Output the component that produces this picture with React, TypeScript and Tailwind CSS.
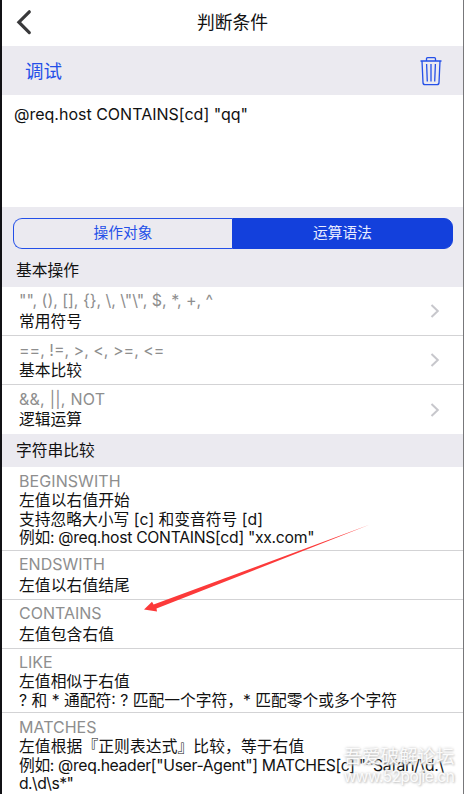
import React from "react";

type Line = { text: string; spacing?: string };
type Item = { title: string; titleSpacing?: string; offset: string; descOffset: string; lines: Line[]; height: string; arrow?: boolean };

const basics: Item[] = [
  { title: '"", (), [], {}, \\, \\"\\", $, *, +, ^', titleSpacing: "tracking-[-0.03px]", offset: "pt-[3px]", descOffset: "pt-[3px]", height: "h-[49px]", lines: [{ text: "常用符号" }], arrow: true },
  { title: "==, !=, >, <, >=, <=", offset: "pt-[4px]", descOffset: "pt-[2px]", height: "h-[49px]", lines: [{ text: "基本比较" }], arrow: true },
  { title: "&&, ||, NOT", titleSpacing: "tracking-[0.25px]", offset: "pt-[4px]", descOffset: "pt-[2px]", height: "h-[49px]", lines: [{ text: "逻辑运算" }], arrow: true },
];

const strings: Item[] = [
  {
    title: "BEGINSWITH",
    titleSpacing: "tracking-[0.08px]",
    offset: "pt-[3.5px]",
    descOffset: "pt-[1.5px]",
    height: "h-[84px]",
    lines: [
      { text: "左值以右值开始", spacing: "tracking-[0.1px]" },
      { text: "支持忽略大小写 [c] 和变音符号 [d]" },
      { text: '例如: @req.host CONTAINS[cd] "xx.com"', spacing: "tracking-[-0.3px]" },
    ],
  },
  { title: "ENDSWITH", offset: "pt-[2.5px]", descOffset: "pt-[3.5px]", height: "h-[49px]", lines: [{ text: "左值以右值结尾", spacing: "tracking-[0.1px]" }] },
  { title: "CONTAINS", offset: "pt-[2.5px]", descOffset: "pt-[3.5px]", height: "h-[49px]", lines: [{ text: "左值包含右值", spacing: "tracking-[0.1px]" }] },
  {
    title: "LIKE",
    offset: "pt-[2.5px]",
    descOffset: "pt-[1.5px]",
    height: "h-[64px]",
    lines: [{ text: "左值相似于右值", spacing: "tracking-[0.1px]" }, { text: "? 和 * 通配符: ? 匹配一个字符，* 匹配零个或多个字符" }],
  },
  {
    title: "MATCHES",
    offset: "pt-[3.5px]",
    descOffset: "pt-[1.5px]",
    height: "h-[81px]",
    lines: [
      { text: "左值根据『正则表达式』比较，等于右值", spacing: "tracking-[0.1px]" },
      { text: '例如: @req.header["User-Agent"] MATCHES[c] "^Safari/\\d.\\', spacing: "tracking-[-0.34px]" },
      { text: 'd.\\d\\s*"', spacing: "tracking-[-0.55px]" },
    ],
  },
];

function Row({ item, last }: { item: Item; last: boolean }) {
  return (
    <div className={`flex shrink-0 items-center justify-between bg-white pl-[17px] pr-[23px] ${item.height} ${last ? "" : "border-b border-[#d3d3d5]"}`}>
      <div className={`self-start whitespace-pre ${item.offset}`}>
        <div className={`h-5 text-[16px] leading-5 text-[#8e8e8e] ${item.titleSpacing ?? ""}`}>{item.title}</div>
        <div className={`text-[15.75px] leading-[18.5px] text-[#111] ${item.descOffset}`}>
          {item.lines.map((l) => (
            <div key={l.text} className={l.spacing ?? ""}>{l.text}</div>
          ))}
        </div>
      </div>
      {item.arrow && (
        <svg width="10" height="14" viewBox="0 0 10 14" fill="none" stroke="#c7c7cc" strokeWidth="2">
          <path d="M1.5 1 7.8 7 1.5 13" />
        </svg>
      )}
    </div>
  );
}

export default function App() {
  return (
    <div className="relative flex h-[794px] w-[464px] flex-col overflow-hidden border-l-2 border-r border-l-[#111115] border-r-[#77777a] bg-white font-['Inter','Noto_Sans_CJK_SC',sans-serif] text-[#111]">
      <header className="grid h-[46px] shrink-0 grid-cols-[40px_1fr_40px] items-center">
        <svg className="ml-[14px] -mt-[2px]" width="16" height="26" viewBox="0 0 16 26" fill="none" stroke="#39393b" strokeWidth="3.2">
          <path d="M13.3 2.8 2.9 13.2 13.3 23.6" strokeLinecap="round" />
        </svg>
        <h1 className="whitespace-nowrap text-center text-[17.8px] leading-6">判断条件</h1>
      </header>
      <div className="flex h-[49px] shrink-0 items-center justify-between bg-[#ebeaf0] pl-[23px] pr-[21px]">
        <button className="text-[18.5px] leading-6 text-[#2450e8]">调试</button>
        <svg width="22" height="30" viewBox="0 0 22 30" fill="none" stroke="#2450e8" strokeWidth="1.3" strokeLinejoin="round">
          <path d="M.5 5H21.5M6.5 5V2.8Q6.5 1.7 7.6 1.7H14.4Q15.5 1.7 15.5 2.8V5M2 5 3 26.6Q3.1 28.6 5 28.6H17Q18.9 28.6 19 26.6L20 5M6.6 8 7.3 25.5M11 8V25.5M15.4 8 14.7 25.5" />
        </svg>
      </div>
      <div className="h-[112px] shrink-0 whitespace-pre bg-white pl-[12px] pt-[9px] text-[16px] leading-5">{'@req.host CONTAINS[cd] "qq"'}</div>
      <div className="h-[80px] shrink-0 bg-[#ebeaf0] pl-[11px] pr-[10px] pt-[11px]">
        <div className="grid h-[31px] grid-cols-[219px_1fr] text-[14.7px] leading-[29px]">
          <div className="rounded-l-[9px] border border-r-0 border-[#2450e8] text-center text-[#2450e8]">操作对象</div>
          <div className="rounded-r-[9px] border border-[#1340dc] bg-[#1340dc] text-center text-[#e8ecff]">运算语法</div>
        </div>
        <h2 className="pl-[3px] pt-[12px] text-[15.75px] leading-[20px]">基本操作</h2>
      </div>
      {basics.map((item, i) => (
        <Row key={item.title} item={item} last={i === 2} />
      ))}
      <h2 className="h-[33px] shrink-0 bg-[#ebeaf0] pl-[14px] text-[15.75px] leading-[33px]">字符串比较</h2>
      {strings.map((item, i) => (
        <Row key={item.title} item={item} last={i === 4} />
      ))}
      <svg className="absolute left-[138px] top-[520px]" width="232" height="94" viewBox="0 0 232 94" fill="#fc3a3a">
        <path d="M230 4.5 16.5 88.6 17 91.6 4 89.4 12 81.8 13.6 84.6Z" />
      </svg>
      <div className="absolute right-[8px] top-[744px] w-[112px] whitespace-nowrap text-center text-[18.5px] leading-[24px] text-white/90 [text-shadow:0_0_3px_#bbb,1px_1px_2px_#ccc]">
        <div>吾爱破解论坛</div>
        <div className="-mt-px text-[15.4px] leading-[20px] tracking-[-0.45px]">www.52pojie.cn</div>
      </div>
    </div>
  );
}
